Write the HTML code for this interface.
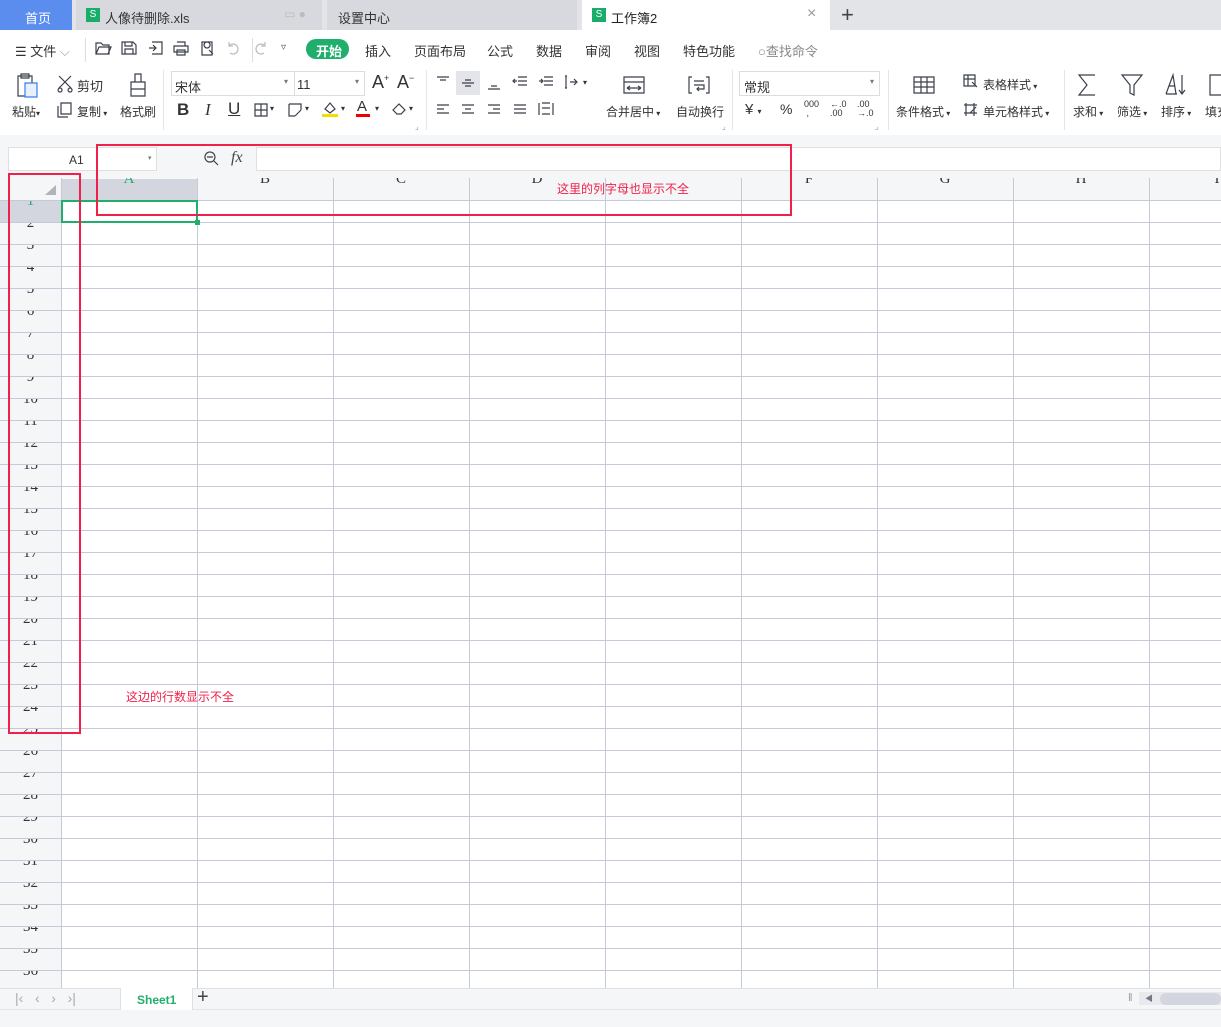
<!DOCTYPE html>
<html><head><meta charset="utf-8"><style>
*{box-sizing:border-box;margin:0;padding:0}
body{width:1221px;height:1027px;overflow:hidden;background:#f5f6f8;font-family:"Liberation Sans","Noto Sans CJK SC",sans-serif;font-size:12px;color:#333;position:relative}
.a{position:absolute}
.t{position:absolute;white-space:nowrap}
svg{position:absolute;overflow:visible}
svg.i *{fill:none;stroke:#3a3f4a;stroke-width:1.2}
.rn{position:absolute;left:0;width:61px;height:22px;overflow:hidden;text-align:center;font-family:'Liberation Serif';font-size:15px;color:#333}
.rn span{position:absolute;left:0;width:61px;top:-7px;line-height:15px}
</style></head><body>
<!-- tab bar -->
<div class="a" style="left:0;top:0;width:1221px;height:30px;background:#e3e4e8"></div>
<div class="a" style="left:0;top:0;width:72px;height:30px;background:#5b8def"></div>
<div class="t" style="left:25px;top:8px;color:#fff;font-size:13px">首页</div>
<div class="a" style="left:76px;top:0;width:246px;height:30px;background:#d8d9de"></div>
<div class="a" style="left:86px;top:8px;width:14px;height:14px;background:#1aad6a;color:#fff;font-size:10px;text-align:center;line-height:14px">S</div>
<div class="t" style="left:105px;top:8px;font-size:13px">人像待删除.xls</div>
<div class="t" style="left:284px;top:7px;color:#bbb;font-size:12px">▭ ●</div>
<div class="a" style="left:327px;top:0;width:250px;height:30px;background:#d8d9de"></div>
<div class="t" style="left:338px;top:8px;font-size:13px">设置中心</div>
<div class="a" style="left:582px;top:0;width:248px;height:30px;background:#fff"></div>
<div class="a" style="left:592px;top:8px;width:14px;height:14px;background:#1aad6a;color:#fff;font-size:10px;text-align:center;line-height:14px">S</div>
<div class="t" style="left:611px;top:8px;font-size:13px;color:#222">工作簿2</div>
<div class="t" style="left:807px;top:5px;font-size:16px;color:#999">×</div>
<div class="t" style="left:841px;top:2px;font-size:22px;color:#444">+</div>
<!-- ribbon -->
<div class="a" style="left:0;top:30px;width:1221px;height:105px;background:#fff"></div>
<div class="t" style="left:15px;top:41px;font-size:13px">☰ 文件 <span style="color:#999">⌵</span></div>
<div class="a" style="left:85px;top:38px;width:1px;height:24px;background:#ddd"></div>
<div class="a" style="left:252px;top:38px;width:1px;height:24px;background:#ddd"></div>
<svg class="i" style="left:95px;top:41px" width="16" height="14"><path d="M1 2h5l2 2h6v9H1z M1 13l3-7h12l-3 7"/></svg>
<svg class="i" style="left:121px;top:41px" width="16" height="14"><path d="M1 1h11l3 3v9H1z M4 1v4h7V1 M4 13V8h8v5"/></svg>
<svg class="i" style="left:148px;top:41px" width="16" height="14"><path d="M4 1h10v12H4 M1 7h7 M5 4l3 3-3 3"/></svg>
<svg class="i" style="left:173px;top:41px" width="16" height="14"><path d="M4 1h8v4 M1 5h14v6H1z M4 9h8v5H4z"/></svg>
<svg class="i" style="left:200px;top:41px" width="16" height="14"><path d="M2 1h10v13H2z M7 7a3 3 0 1 1 0.1 0 M9 9l4 4"/></svg>
<svg class="i" style="left:226px;top:41px" width="16" height="14"><path d="M3 5a5 5 0 1 1 1 7 M3 1v4h4" style="stroke:#bbb"/></svg>
<svg class="i" style="left:252px;top:41px" width="16" height="14"><path d="M13 5a5 5 0 1 0 -1 7 M13 1v4H9" style="stroke:#bbb"/></svg>
<div class="t" style="left:281px;top:42px;font-size:10px;color:#555">▿</div>
<div class="a" style="left:306px;top:39px;width:43px;height:20px;border-radius:10px;background:#1fae6c"></div>
<div class="t" style="left:316px;top:41px;font-size:13px;color:#fff;font-weight:bold">开始</div>
<div class="t" style="left:365px;top:41px;font-size:13px">插入</div>
<div class="t" style="left:414px;top:41px;font-size:13px">页面布局</div>
<div class="t" style="left:487px;top:41px;font-size:13px">公式</div>
<div class="t" style="left:536px;top:41px;font-size:13px">数据</div>
<div class="t" style="left:585px;top:41px;font-size:13px">审阅</div>
<div class="t" style="left:634px;top:41px;font-size:13px">视图</div>
<div class="t" style="left:683px;top:41px;font-size:13px">特色功能</div>
<div class="t" style="left:758px;top:41px;font-size:13px;color:#888">○查找命令</div>
<!-- clipboard group -->
<svg class="i" style="left:16px;top:73px" width="26" height="26"><path d="M2 3h14v20H2z M5 1h8v4H5z"/><path d="M9 10h12v14H9z" style="stroke:#3a7cf0;fill:#e8f0fd"/></svg>
<div class="t" style="left:12px;top:103px">粘贴<span style="font-size:8px">▾</span></div>
<svg class="i" style="left:57px;top:75px" width="18" height="16"><path d="M2 1l12 12 M14 1L2 13 M3 13a2 2 0 1 0 .1 0 M13 13a2 2 0 1 0 .1 0"/></svg>
<div class="t" style="left:77px;top:76px;font-size:13px">剪切</div>
<svg class="i" style="left:57px;top:102px" width="16" height="16"><path d="M4 1h10v11H4z M1 4v11h10"/></svg>
<div class="t" style="left:77px;top:103px">复制<span style="font-size:8px"> ▾</span></div>
<svg class="i" style="left:128px;top:73px" width="20" height="26"><path d="M7 1h6v8H7z M3 9h14v14H3z M3 16h14"/></svg>
<div class="t" style="left:120px;top:103px">格式刷</div>
<div class="a" style="left:163px;top:70px;width:1px;height:60px;background:#e5e5e5"></div>
<!-- font -->
<div class="a" style="left:171px;top:71px;width:194px;height:25px;border:1px solid #ddd"></div>
<div class="a" style="left:294px;top:71px;width:1px;height:25px;background:#ddd"></div>
<div class="t" style="left:175px;top:77px;font-size:13px">宋体</div>
<div class="t" style="left:284px;top:77px;font-size:8px;color:#777">▾</div>
<div class="t" style="left:297px;top:77px;font-size:13px">11</div>
<div class="t" style="left:355px;top:77px;font-size:8px;color:#777">▾</div>
<div class="t" style="left:372px;top:72px;font-size:18px">A<sup style="font-size:9px">+</sup></div>
<div class="t" style="left:397px;top:72px;font-size:18px">A<sup style="font-size:9px">−</sup></div>
<div class="t" style="left:177px;top:100px;font-size:17px;font-weight:bold">B</div>
<div class="t" style="left:205px;top:100px;font-size:17px;font-style:italic;font-family:'Liberation Serif'">I</div>
<div class="t" style="left:228px;top:99px;font-size:17px;text-decoration:underline">U</div>
<svg class="i" style="left:254px;top:103px" width="14" height="14"><path d="M1 1h12v12H1z M7 1v12 M1 7h12"/></svg>
<div class="t" style="left:270px;top:104px;font-size:8px">▾</div>
<svg class="i" style="left:288px;top:103px" width="14" height="14"><path d="M1 1h12v6 M1 1v12h6 M7 13l6-6"/></svg>
<div class="t" style="left:305px;top:104px;font-size:8px">▾</div>
<svg class="i" style="left:322px;top:101px" width="16" height="14"><path d="M3 8l5-6 5 6-5 4z"/></svg>
<div class="a" style="left:322px;top:114px;width:16px;height:3px;background:#f0e000"></div>
<div class="t" style="left:341px;top:104px;font-size:8px">▾</div>
<div class="t" style="left:357px;top:98px;font-size:15px">A</div>
<div class="a" style="left:356px;top:114px;width:14px;height:3px;background:#e00"></div>
<div class="t" style="left:375px;top:104px;font-size:8px">▾</div>
<svg class="i" style="left:392px;top:103px" width="14" height="12"><path d="M1 7l6-6 6 6-4 4H5z"/></svg>
<div class="t" style="left:409px;top:104px;font-size:8px">▾</div>
<div class="a" style="left:426px;top:70px;width:1px;height:60px;background:#e5e5e5"></div>
<!-- align -->
<div class="a" style="left:456px;top:71px;width:24px;height:24px;background:#e3e5ea"></div>
<svg class="i" style="left:436px;top:76px" width="14" height="12"><path d="M1 1h12 M4 4h6"/></svg>
<svg class="i" style="left:461px;top:78px" width="14" height="12"><path d="M4 2h6 M1 5h12 M4 8h6"/></svg>
<svg class="i" style="left:487px;top:80px" width="14" height="12"><path d="M4 6h6 M1 9h12"/></svg>
<svg class="i" style="left:512px;top:76px" width="16" height="12"><path d="M6 1h9 M6 5h9 M6 9h9 M1 5h4 M3 3l-2 2 2 2"/></svg>
<svg class="i" style="left:538px;top:76px" width="16" height="12"><path d="M6 1h9 M6 5h9 M6 9h9 M1 5h4 M3 3l2 2-2 2"/></svg>
<svg class="i" style="left:564px;top:75px" width="16" height="14"><path d="M2 1v12 M1 1h2 M1 13h2 M6 7h7 M10 4l3 3-3 3"/></svg>
<div class="t" style="left:583px;top:78px;font-size:8px">▾</div>
<svg class="i" style="left:436px;top:104px" width="14" height="12"><path d="M1 1h12 M1 5h7 M1 9h12"/></svg>
<svg class="i" style="left:461px;top:104px" width="14" height="12"><path d="M1 1h12 M4 5h6 M1 9h12"/></svg>
<svg class="i" style="left:487px;top:104px" width="14" height="12"><path d="M1 1h12 M6 5h7 M1 9h12"/></svg>
<svg class="i" style="left:513px;top:104px" width="14" height="12"><path d="M1 1h12 M1 5h12 M1 9h12"/></svg>
<svg class="i" style="left:538px;top:102px" width="16" height="14"><path d="M1 1v12 M15 1v12 M4 1h8 M4 12h8 M4 6h8"/></svg>
<svg class="i" style="left:623px;top:76px" width="22" height="18"><path d="M1 1h20v16H1z M1 6h20 M4 12h14 M4 12l3-2 M4 12l3 2 M18 12l-3-2 M18 12l-3 2"/></svg>
<div class="t" style="left:606px;top:103px">合并居中<span style="font-size:8px"> ▾</span></div>
<svg class="i" style="left:688px;top:76px" width="22" height="18"><path d="M4 1H1v16h3 M18 1h3v16h-3 M6 5h10 M6 9h10v4H9 M11 11l-2 2 2 2"/></svg>
<div class="t" style="left:676px;top:103px">自动换行</div>
<div class="a" style="left:732px;top:70px;width:1px;height:60px;background:#e5e5e5"></div>
<!-- number -->
<div class="a" style="left:739px;top:71px;width:141px;height:25px;border:1px solid #ddd"></div>
<div class="t" style="left:744px;top:77px;font-size:13px">常规</div>
<div class="t" style="left:870px;top:77px;font-size:8px;color:#777">▾</div>
<div class="t" style="left:745px;top:101px;font-size:15px">¥ <span style="font-size:8px">▾</span></div>
<div class="t" style="left:780px;top:101px;font-size:14px">%</div>
<div class="t" style="left:804px;top:100px;font-size:9px;line-height:9px">000<br>&nbsp;,</div>
<div class="t" style="left:830px;top:100px;font-size:9px;line-height:9px">←.0<br>.00</div>
<div class="t" style="left:857px;top:100px;font-size:9px;line-height:9px">.00<br>→.0</div>
<div class="a" style="left:888px;top:70px;width:1px;height:60px;background:#e5e5e5"></div>
<svg class="i" style="left:913px;top:76px" width="22" height="18"><path d="M1 1h20v16H1z M1 6h20 M1 11h20 M8 1v16 M14 1v16"/></svg>
<div class="t" style="left:896px;top:103px">条件格式<span style="font-size:8px"> ▾</span></div>
<svg class="i" style="left:963px;top:74px" width="16" height="14"><path d="M1 1h11v11H1z M1 5h11 M5 1v11 M9 8l5 5"/></svg>
<div class="t" style="left:983px;top:76px">表格样式<span style="font-size:8px"> ▾</span></div>
<svg class="i" style="left:963px;top:102px" width="16" height="14"><path d="M3 1v13 M11 1v13 M1 3h13 M1 11h13 M7 11l6-6"/></svg>
<div class="t" style="left:983px;top:103px">单元格样式<span style="font-size:8px"> ▾</span></div>
<div class="a" style="left:1064px;top:70px;width:1px;height:60px;background:#e5e5e5"></div>
<svg class="i" style="left:1077px;top:74px" width="20" height="22"><path d="M18 1H2l8 10-8 10h16"/></svg>
<div class="t" style="left:1073px;top:103px">求和<span style="font-size:8px"> ▾</span></div>
<svg class="i" style="left:1121px;top:74px" width="22" height="22"><path d="M1 1h20l-8 10v10l-4-2v-8z"/></svg>
<div class="t" style="left:1117px;top:103px">筛选<span style="font-size:8px"> ▾</span></div>
<svg class="i" style="left:1165px;top:74px" width="22" height="22"><path d="M1 20L8 1l3 19 M4 12h6 M1 20h11 M17 1v19 M14 16l3 4 3-4"/></svg>
<div class="t" style="left:1161px;top:103px">排序<span style="font-size:8px"> ▾</span></div>
<svg class="i" style="left:1209px;top:74px" width="22" height="22"><path d="M1 1h16v20H1z"/></svg>
<div class="t" style="left:1205px;top:103px">填充</div>
<div class="t" style="left:415px;top:122px;font-size:8px;color:#999">⌟</div>
<div class="t" style="left:722px;top:122px;font-size:8px;color:#999">⌟</div>
<div class="t" style="left:875px;top:122px;font-size:8px;color:#999">⌟</div>
<!-- formula bar -->
<div class="a" style="left:8px;top:147px;width:149px;height:24px;background:#fff;border:1px solid #e0e0e0"></div>
<div class="t" style="left:69px;top:153px">A1</div>
<div class="t" style="left:148px;top:154px;font-size:7px;color:#777">▾</div>
<svg class="i" style="left:204px;top:151px" width="16" height="16"><path d="M6 1a5 5 0 1 1 -.1 0 M3 6h6 M10 10l4 4"/></svg>
<div class="t" style="left:231px;top:149px;font-size:16px;font-style:italic;font-family:'Liberation Serif';color:#444">fx</div>
<div class="a" style="left:256px;top:147px;width:965px;height:24px;background:#fff;border:1px solid #e0e0e0"></div>
<!-- grid -->
<div class="a" style="left:0;top:178px;width:1221px;height:810px;background:#fff;overflow:hidden">
<svg style="left:0;top:0" width="1221" height="810">
<rect x="0" y="0" width="1221" height="22" fill="#f5f6f8"/>
<rect x="0" y="0" width="61" height="810" fill="#f5f6f8"/>
<rect x="61" y="1" width="136" height="21" fill="#d3d6de"/>
<rect x="0" y="22" width="61" height="22" fill="#d3d6de"/>
<path d="M56 7v10H45z" fill="#b0b3b8"/>
<path fill="none" stroke="#c4cad8" stroke-width="1" d="M61.5 0v810 M197.5 0v810 M333.5 0v810 M469.5 0v810 M605.5 0v810 M741.5 0v810 M877.5 0v810 M1013.5 0v810 M1149.5 0v810"/>
<path fill="none" stroke="#c4cad8" stroke-width="1" d="M0 22.5h1221 M0 44.5h1221 M0 66.5h1221 M0 88.5h1221 M0 110.5h1221 M0 132.5h1221 M0 154.5h1221 M0 176.5h1221 M0 198.5h1221 M0 220.5h1221 M0 242.5h1221 M0 264.5h1221 M0 286.5h1221 M0 308.5h1221 M0 330.5h1221 M0 352.5h1221 M0 374.5h1221 M0 396.5h1221 M0 418.5h1221 M0 440.5h1221 M0 462.5h1221 M0 484.5h1221 M0 506.5h1221 M0 528.5h1221 M0 550.5h1221 M0 572.5h1221 M0 594.5h1221 M0 616.5h1221 M0 638.5h1221 M0 660.5h1221 M0 682.5h1221 M0 704.5h1221 M0 726.5h1221 M0 748.5h1221 M0 770.5h1221 M0 792.5h1221"/>
<g font-family="Liberation Serif" font-size="15" text-anchor="middle" fill="#333">
<text x="129" y="5" fill="#1fae6c">A</text>
<text x="265" y="5">B</text>
<text x="401" y="5">C</text>
<text x="537" y="5">D</text>
<text x="809" y="5">F</text>
<text x="945" y="5">G</text>
<text x="1081" y="5">H</text>
<text x="1217" y="5">I</text>
</g>
</svg>
<div class="rn" style="top:23px"><span style="color:#1fae6c">1</span></div>
<div class="rn" style="top:45px"><span>2</span></div>
<div class="rn" style="top:67px"><span>3</span></div>
<div class="rn" style="top:89px"><span>4</span></div>
<div class="rn" style="top:111px"><span>5</span></div>
<div class="rn" style="top:133px"><span>6</span></div>
<div class="rn" style="top:155px"><span>7</span></div>
<div class="rn" style="top:177px"><span>8</span></div>
<div class="rn" style="top:199px"><span>9</span></div>
<div class="rn" style="top:221px"><span>10</span></div>
<div class="rn" style="top:243px"><span>11</span></div>
<div class="rn" style="top:265px"><span>12</span></div>
<div class="rn" style="top:287px"><span>13</span></div>
<div class="rn" style="top:309px"><span>14</span></div>
<div class="rn" style="top:331px"><span>15</span></div>
<div class="rn" style="top:353px"><span>16</span></div>
<div class="rn" style="top:375px"><span>17</span></div>
<div class="rn" style="top:397px"><span>18</span></div>
<div class="rn" style="top:419px"><span>19</span></div>
<div class="rn" style="top:441px"><span>20</span></div>
<div class="rn" style="top:463px"><span>21</span></div>
<div class="rn" style="top:485px"><span>22</span></div>
<div class="rn" style="top:507px"><span>23</span></div>
<div class="rn" style="top:529px"><span>24</span></div>
<div class="rn" style="top:551px"><span>25</span></div>
<div class="rn" style="top:573px"><span>26</span></div>
<div class="rn" style="top:595px"><span>27</span></div>
<div class="rn" style="top:617px"><span>28</span></div>
<div class="rn" style="top:639px"><span>29</span></div>
<div class="rn" style="top:661px"><span>30</span></div>
<div class="rn" style="top:683px"><span>31</span></div>
<div class="rn" style="top:705px"><span>32</span></div>
<div class="rn" style="top:727px"><span>33</span></div>
<div class="rn" style="top:749px"><span>34</span></div>
<div class="rn" style="top:771px"><span>35</span></div>
<div class="rn" style="top:793px"><span>36</span></div>
</div>
<!-- selection -->
<div class="a" style="left:61px;top:200px;width:137px;height:23px;border:2px solid #1fae6c"></div>
<div class="a" style="left:195px;top:220px;width:5px;height:5px;background:#1fae6c"></div>
<!-- annotations -->
<div class="a" style="left:96px;top:144px;width:696px;height:72px;border:2px solid #f0204a"></div>
<div class="t" style="left:557px;top:180px;color:#f0204a;font-size:12px">这里的列字母也显示不全</div>
<div class="a" style="left:8px;top:173px;width:73px;height:561px;border:2px solid #f0204a"></div>
<div class="t" style="left:126px;top:688px;color:#f0204a;font-size:12px">这边的行数显示不全</div>
<!-- sheet bar -->
<div class="a" style="left:0;top:988px;width:1221px;height:22px;background:#f5f6f8;border-top:1px solid #dde0e6;border-bottom:1px solid #e3e5ea"></div>
<div class="t" style="left:15px;top:990px;font-size:14px;color:#aaa">|‹ &nbsp; ‹ &nbsp; › &nbsp; ›|</div>
<div class="a" style="left:120px;top:988px;width:73px;height:22px;background:#fff;border-left:1px solid #dde0e6;border-right:1px solid #dde0e6"></div>
<div class="t" style="left:137px;top:993px;color:#1fae6c;font-weight:bold;font-size:12px">Sheet1</div>
<div class="t" style="left:197px;top:986px;font-size:20px;color:#444">+</div>
<div class="t" style="left:1128px;top:992px;font-size:11px;color:#99a">‖</div>
<div class="a" style="left:1139px;top:992px;width:82px;height:13px;background:#e8eaee"></div>
<div class="t" style="left:1145px;top:993px;font-size:8px;color:#778">◀</div>
<div class="a" style="left:1160px;top:993px;width:61px;height:12px;border-radius:6px;background:#d3d6de"></div>
</body></html>
